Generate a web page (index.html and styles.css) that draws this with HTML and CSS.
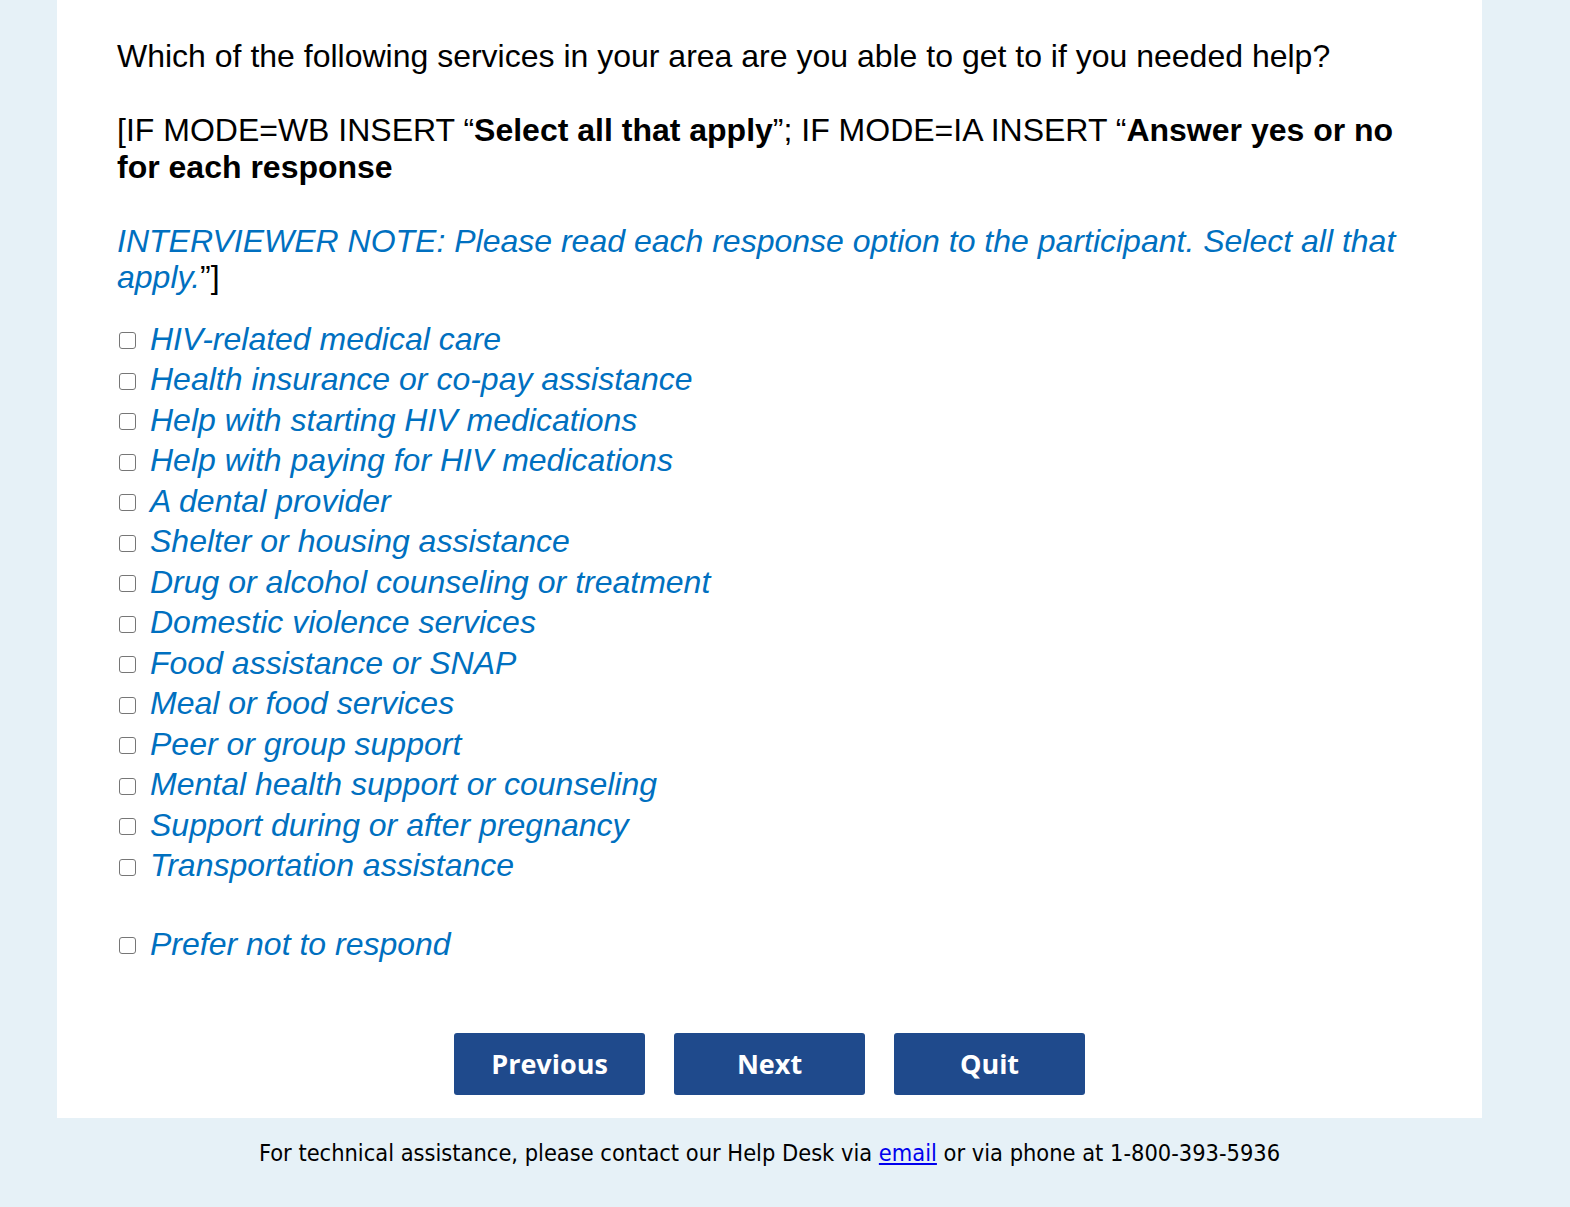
FILE: index.html
```html
<!DOCTYPE html>
<html lang="en">
<head>
<meta charset="utf-8">
<title>Survey</title>
<link rel="stylesheet" href="styles.css">
</head>
<body>
<main class="panel">
  <p class="question">Which of the following services in your area are you able to get to if you needed help?</p>
  <p class="instruction">[IF MODE=WB INSERT “<b>Select all that apply</b>”; IF MODE=IA INSERT “<b>Answer yes or no for each response</b></p>
  <p class="note"><i>INTERVIEWER NOTE: Please read each response option to the participant. Select all that apply.</i>”]</p>
  <ul class="options">
    <li><label><input type="checkbox"><span>HIV-related medical care</span></label></li>
    <li><label><input type="checkbox"><span>Health insurance or co-pay assistance</span></label></li>
    <li><label><input type="checkbox"><span>Help with starting HIV medications</span></label></li>
    <li><label><input type="checkbox"><span>Help with paying for HIV medications</span></label></li>
    <li><label><input type="checkbox"><span>A dental provider</span></label></li>
    <li><label><input type="checkbox"><span>Shelter or housing assistance</span></label></li>
    <li><label><input type="checkbox"><span>Drug or alcohol counseling or treatment</span></label></li>
    <li><label><input type="checkbox"><span>Domestic violence services</span></label></li>
    <li><label><input type="checkbox"><span>Food assistance or SNAP</span></label></li>
    <li><label><input type="checkbox"><span>Meal or food services</span></label></li>
    <li><label><input type="checkbox"><span>Peer or group support</span></label></li>
    <li><label><input type="checkbox"><span>Mental health support or counseling</span></label></li>
    <li><label><input type="checkbox"><span>Support during or after pregnancy</span></label></li>
    <li><label><input type="checkbox"><span>Transportation assistance</span></label></li>
    <li class="refuse"><label><input type="checkbox"><span>Prefer not to respond</span></label></li>
  </ul>
  <div class="nav">
    <button class="btn" type="button">Previous</button>
    <button class="btn" type="button">Next</button>
    <button class="btn" type="button">Quit</button>
  </div>
</main>
<footer class="footer">For technical assistance, please contact our Help Desk via <a href="#">email</a> or via phone at 1-800-393-5936</footer>
</body>
</html>
```
FILE: styles.css
```css
html, body {
  margin: 0;
  padding: 0;
  background: #e6f1f7;
}
body {
  font-family: "Liberation Sans", Arial, sans-serif;
  color: #000;
}
.panel {
  margin-left: 57px;
  width: 1425px;
  box-sizing: border-box;
  background: #fff;
  padding: 38px 60px 23px;
}
.question, .instruction, .note {
  font-size: 32px;
  line-height: 37px;
  margin: 0 0 37px;
}
.instruction {
  margin-bottom: 37px;
}
.note {
  line-height: 36px;
  margin-bottom: 24px;
}
.note i {
  color: #0070c0;
}
.options {
  list-style: none;
  margin: 0;
  padding: 0;
}
.options li {
  height: 40.5px;
  display: flex;
  align-items: center;
}
.options li.refuse {
  margin-top: 38px;
}
.options label {
  display: flex;
  align-items: center;
}
.options input {
  appearance: none;
  width: 17px;
  height: 17px;
  margin: 3px 14px 0 2px;
  border: 1.7px solid #767676;
  border-radius: 3px;
  background: #fff;
  box-sizing: border-box;
}
.options span {
  font-size: 32px;
  font-style: italic;
  color: #0070c0;
}
.nav {
  display: flex;
  justify-content: center;
  gap: 29px;
  margin-top: 68px;
}
.btn {
  width: 191px;
  height: 62px;
  background: #1f4a8c;
  color: #fff;
  border: none;
  border-radius: 3px;
  font-family: "Open Sans", sans-serif;
  font-weight: 700;
  font-size: 27px;
}
.footer {
  margin-left: 57px;
  width: 1425px;
  text-align: center;
  padding: 21px 0 30px 0;
  font-family: "DejaVu Sans Condensed", "DejaVu Sans", sans-serif;
  font-size: 23.4px;
  color: #000;
}
.footer a {
  color: #0000ee;
}
```
